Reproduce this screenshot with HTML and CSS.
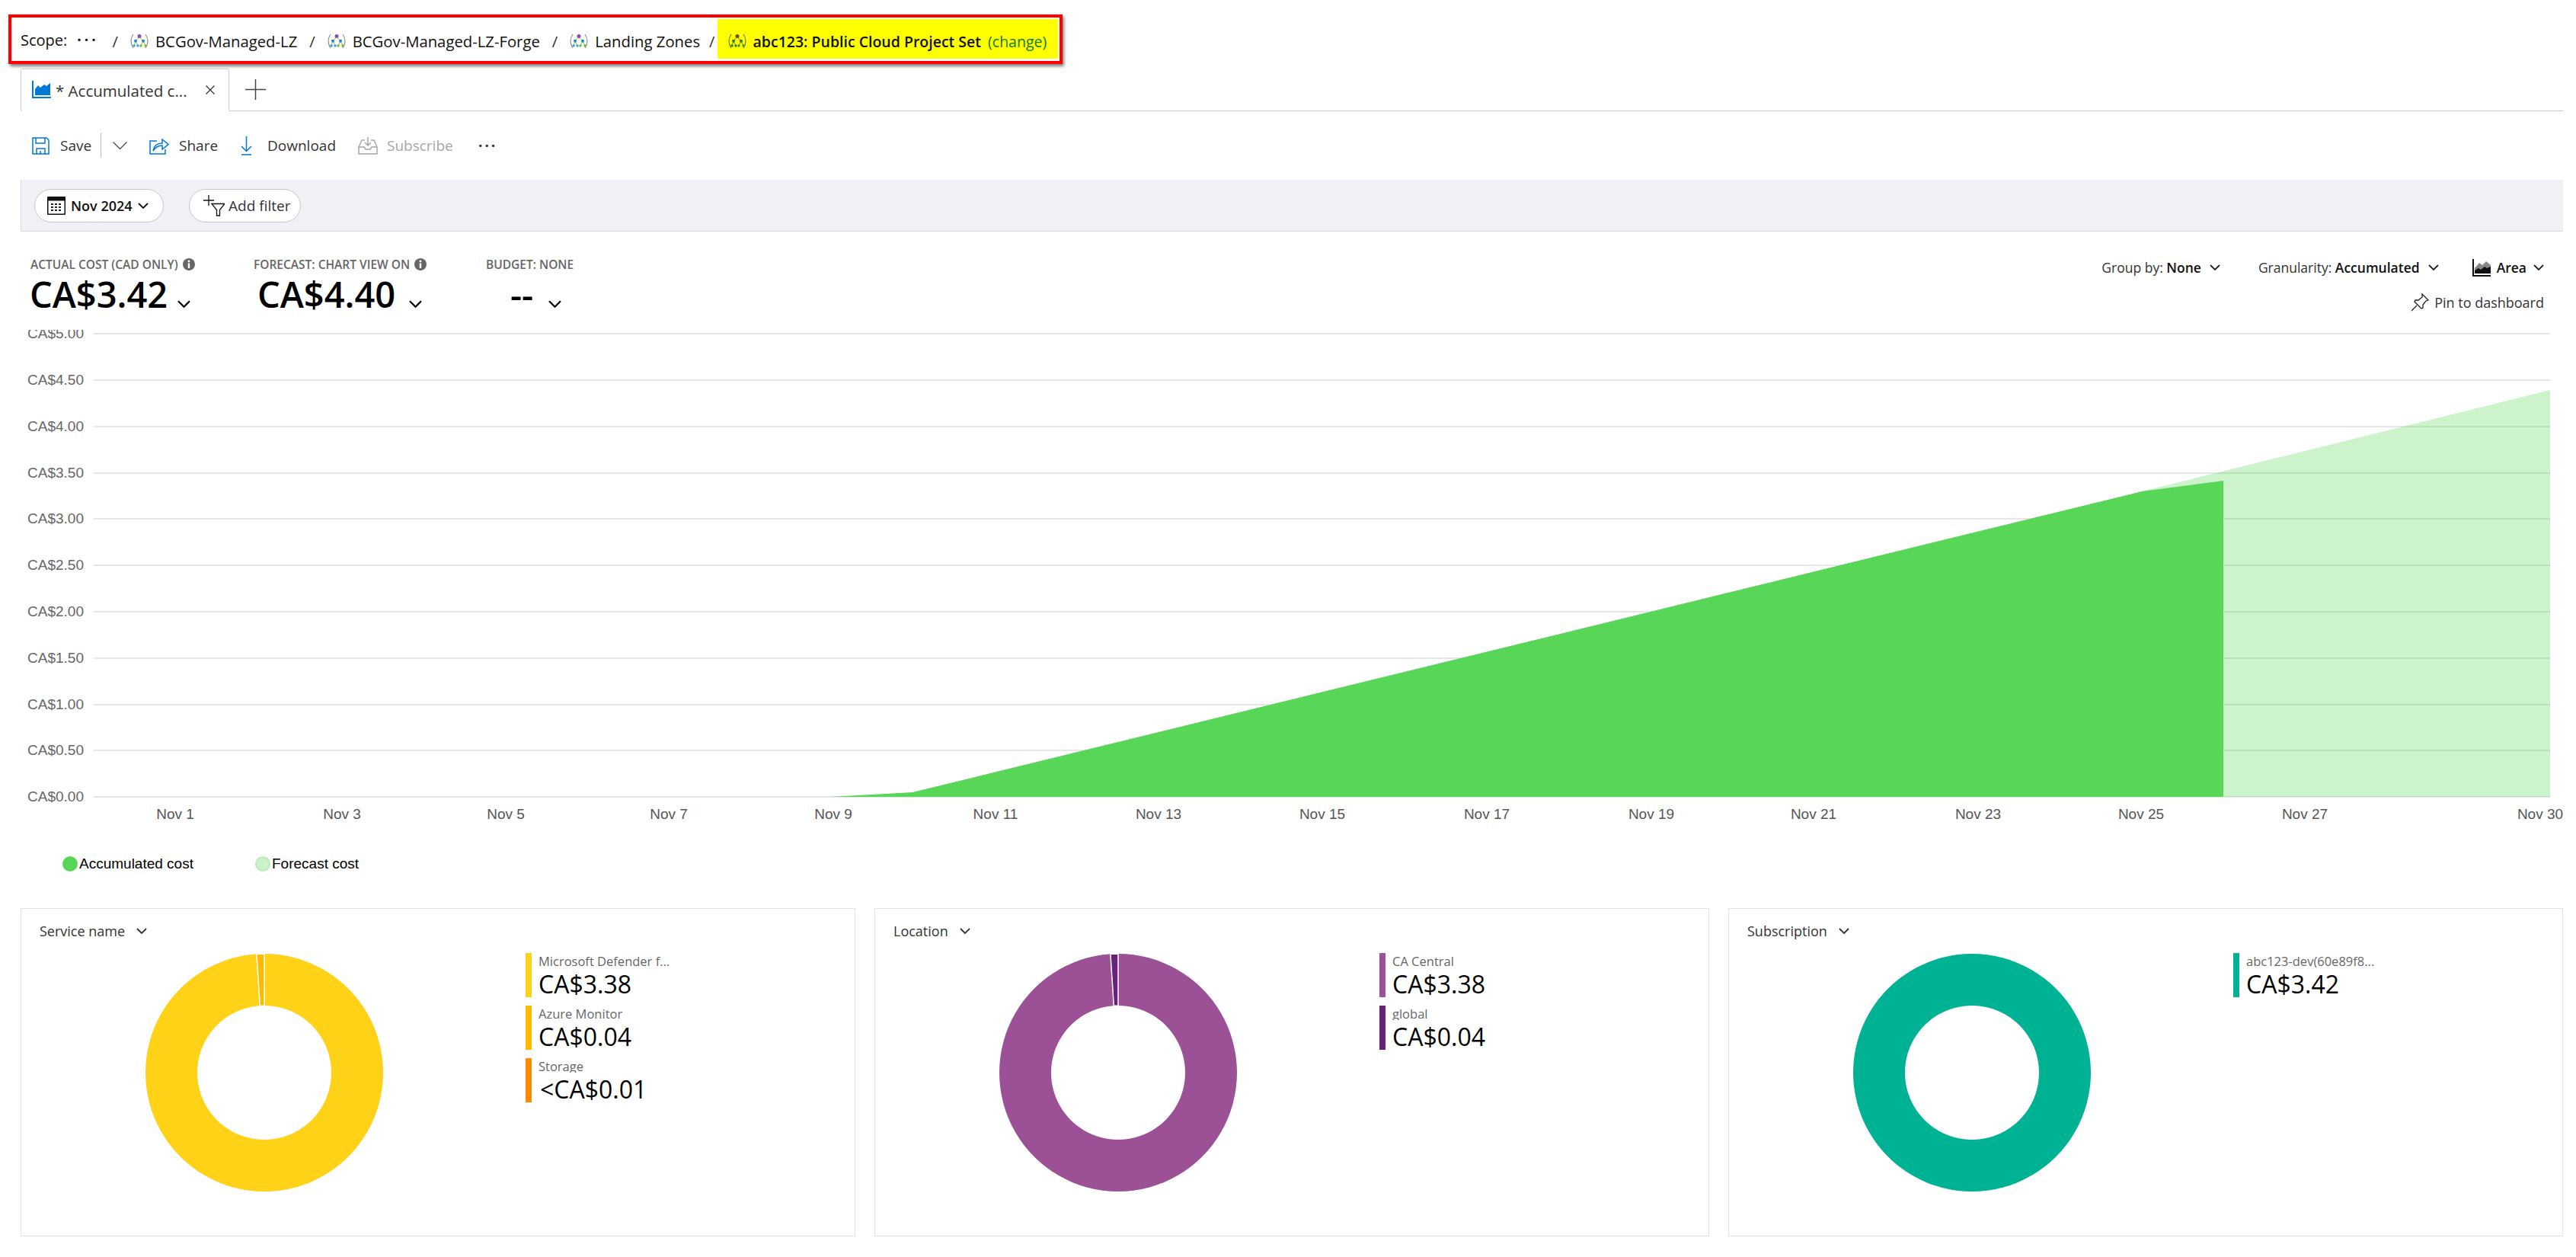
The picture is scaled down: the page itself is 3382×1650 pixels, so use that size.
FILE: index.html
```html
<!DOCTYPE html>
<html lang="en">
<head>
    <meta charset="UTF-8">
    <title>Cost analysis</title>
    <link rel="stylesheet" href="styles.css">
</head>
<body>
    <svg class="defs">
        <symbol id="chev" viewBox="0 0 14 8"><path d="M1 1l6 6 6-6" fill="none" stroke="currentColor" stroke-width="1.8"/></symbol>
        <symbol id="mg" viewBox="0 0 24 20">
            <path d="M4 1C2 4 1 7 1 10s1 6 3 9M20 1c2 3 3 6 3 9s-1 6-3 9" fill="none" stroke="#8f8f8f" stroke-width="1.2"/>
            <path d="M12 4L7 10l-2 6M7 10l3 6M12 4l5 6-3 6M17 10l3 6" fill="none" stroke="#86c440" stroke-width="1"/>
            <circle cx="12" cy="3.5" r="2.5" fill="#8a4fa8"/>
            <circle cx="7" cy="9.7" r="2" fill="#1e88d8"/><circle cx="17" cy="9.7" r="2" fill="#1e88d8"/>
            <circle cx="5" cy="16" r="1.7" fill="#3aa0e0"/><circle cx="10" cy="16" r="1.7" fill="#3aa0e0"/>
            <circle cx="14" cy="16" r="1.7" fill="#7ab82e"/><circle cx="20" cy="16" r="1.7" fill="#7ab82e"/>
        </symbol>
        <symbol id="mg-hi" viewBox="0 0 24 20">
            <path d="M4 1C2 4 1 7 1 10s1 6 3 9M20 1c2 3 3 6 3 9s-1 6-3 9" fill="none" stroke="#6f7a20" stroke-width="1.2"/>
            <path d="M12 4L7 10l-2 6M7 10l3 6M12 4l5 6-3 6M17 10l3 6" fill="none" stroke="#5a8f10" stroke-width="1"/>
            <circle cx="12" cy="3.5" r="2.5" fill="#7a4a20"/>
            <circle cx="7" cy="9.7" r="2" fill="#2a7a30"/><circle cx="17" cy="9.7" r="2" fill="#2a7a30"/>
            <circle cx="5" cy="16" r="1.7" fill="#2a7a30"/><circle cx="10" cy="16" r="1.7" fill="#2a7a30"/>
            <circle cx="14" cy="16" r="1.7" fill="#4f8f10"/><circle cx="20" cy="16" r="1.7" fill="#4f8f10"/>
        </symbol>
        <symbol id="info" viewBox="0 0 16 16"><circle cx="8" cy="8" r="8" fill="#666"/><rect x="6.8" y="6.5" width="2.4" height="6.5" fill="#fff"/><circle cx="8" cy="4" r="1.4" fill="#fff"/></symbol>
    </svg>

    <div class="scope-bar">
        <span class="scope-label">Scope:</span>
        <span class="scope-dots">&middot;&middot;&middot;</span>
        <span class="scope-sep">/</span>
        <svg class="mg-icon"><use href="#mg"/></svg>
        <span class="crumb">BCGov-Managed-LZ</span>
        <span class="scope-sep">/</span>
        <svg class="mg-icon"><use href="#mg"/></svg>
        <span class="crumb">BCGov-Managed-LZ-Forge</span>
        <span class="scope-sep">/</span>
        <svg class="mg-icon"><use href="#mg"/></svg>
        <span class="crumb">Landing Zones</span>
        <span class="scope-sep scope-sep-last">/</span>
        <div class="scope-current">
            <svg class="mg-icon"><use href="#mg-hi"/></svg>
            <span class="crumb-current">abc123: Public Cloud Project Set</span>
            <span class="crumb-change">(change)</span>
        </div>
    </div>

    <div class="tab-row">
        <div class="tab">
            <svg class="tab-icon" viewBox="0 0 25 23"><path d="M1 0v22h24" fill="none" stroke="#0078d4" stroke-width="2"/><path d="M4 19v-8l4-5 3 3 5-4 3 2 5-4v16z" fill="#0078d4"/></svg>
            <span class="tab-title">* Accumulated c...</span>
            <svg class="tab-close" viewBox="0 0 12 12"><path d="M.5.5l11 11M11.5.5l-11 11" stroke="#333" stroke-width="1.3"/></svg>
        </div>
        <svg class="tab-add" viewBox="0 0 27 27"><path d="M13.5 0v27M0 13.5h27" stroke="#444" stroke-width="1.5"/></svg>
    </div>

    <div class="toolbar">
        <svg class="tool-icon icon-save" viewBox="0 0 23 23"><path d="M1 1h18l3 3v18H1zM6 22v-7h11v7M5 1v7h12V1M11 18v4" fill="none" stroke="#0078d4" stroke-width="1.5"/></svg>
        <span class="tool-text tool-save">Save</span>
        <span class="tool-divider"></span>
        <svg class="tool-chev" viewBox="0 0 19 10"><path d="M.5.5l9 9 9-9" fill="none" stroke="#444" stroke-width="1.2"/></svg>
        <svg class="tool-icon icon-share" viewBox="0 0 26 23"><path d="M10 5H1v17h20v-6" fill="none" stroke="#0078d4" stroke-width="1.5"/><path d="M5 18c1-7 6-10 12-10V3l8 6.5-8 6.5v-5c-5 0-9 2-12 7z" fill="none" stroke="#0078d4" stroke-width="1.5"/></svg>
        <span class="tool-text tool-share">Share</span>
        <svg class="tool-icon icon-download" viewBox="0 0 15 25"><path d="M7.5 0v19M1 13l6.5 6.5L14 13M1 24h13" fill="none" stroke="#0078d4" stroke-width="1.5"/></svg>
        <span class="tool-text tool-download">Download</span>
        <svg class="tool-icon icon-subscribe" viewBox="0 0 26 24"><path d="M1 14l4-9h4M25 14l-4-9h-4M1 14v9h24v-9h-7l-2 3h-6l-2-3zM13 1v11M9 8l4 4 4-4" fill="none" stroke="#a6a6a6" stroke-width="1.5"/></svg>
        <span class="tool-text tool-subscribe">Subscribe</span>
        <span class="tool-more">&middot;&middot;&middot;</span>
    </div>

    <div class="filter-bar">
        <div class="pill pill-date">
            <svg class="cal-icon" viewBox="0 0 24 24"><rect width="24" height="24" rx="1" fill="#111"/><rect x="1.5" y="5.5" width="21" height="17" fill="#fff"/><path d="M5 9h3v2H5zM10 9h3v2h-3zM15 9h3v2h-3zM5 13h3v2H5zM10 13h3v2h-3zM15 13h3v2h-3zM5 17h3v2H5zM10 17h3v2h-3zM15 17h3v2h-3z" fill="#222"/></svg>
            <span class="pill-date-text">Nov 2024</span>
            <svg class="pill-chev"><use href="#chev"/></svg>
        </div>
        <div class="pill pill-filter">
            <svg class="filter-icon" viewBox="0 0 28 28"><path d="M7 0v14M0 7h14" stroke="#111" stroke-width="1.3"/><path d="M11 11.5h17l-6.5 8V27h-4v-7.5z" fill="none" stroke="#111" stroke-width="1.3"/></svg>
            <span class="pill-filter-text">Add filter</span>
        </div>
    </div>

    <div class="summary">
        <div class="kpis">
            <div class="kpi kpi-actual">
                <div class="kpi-label">ACTUAL COST (CAD ONLY) <svg class="info-icon"><use href="#info"/></svg></div>
                <div class="kpi-value">CA$3.42<svg class="kpi-chev"><use href="#chev"/></svg></div>
            </div>
            <div class="kpi kpi-forecast">
                <div class="kpi-label">FORECAST: CHART VIEW ON <svg class="info-icon"><use href="#info"/></svg></div>
                <div class="kpi-value">CA$4.40<svg class="kpi-chev"><use href="#chev"/></svg></div>
            </div>
            <div class="kpi kpi-budget">
                <div class="kpi-label">BUDGET: NONE</div>
                <div class="kpi-value">--<svg class="kpi-chev"><use href="#chev"/></svg></div>
            </div>
        </div>
        <div class="chart-controls">
            <div class="control-row">
                <span class="control">Group by: <b>None</b><svg class="control-chev"><use href="#chev"/></svg></span>
                <span class="control control-gran">Granularity: <b>Accumulated</b><svg class="control-chev"><use href="#chev"/></svg></span>
                <span class="control control-area">
                    <svg class="area-icon" viewBox="0 0 24 23"><path d="M1 0v22h23" fill="none" stroke="#111" stroke-width="2"/><path d="M3 12l6-7 4 3 5-5 6 5v8H3z" fill="#888"/><path d="M3 19v-4l5-3 3 2 5-4 3 2 5-2v9z" fill="#111"/></svg>
                    <b>Area</b><svg class="control-chev"><use href="#chev"/></svg>
                </span>
            </div>
            <div class="pin-row">
                <svg class="pin-icon" viewBox="0 0 24 24"><path d="M15 1l8 8-3 1-4 5 0 4-2 1-9-9 1-2h4l5-4zM8 16l-7 7" fill="none" stroke="#222" stroke-width="1.3"/></svg>
                <span>Pin to dashboard</span>
            </div>
        </div>
    </div>

    <svg class="cost-chart" viewBox="0 433 3382 652">
        <g class="grid">
            <path d="M123 438H3348M123 499H3348M123 560H3348M123 621H3348M123 681H3348M123 742H3348M123 803H3348M123 864H3348M123 925H3348M123 985H3348M123 1046H3348"/>
        </g>
        <polygon class="area-forecast" points="2812,645 3348,512 3348,1046 2812,1046"/>
        <polygon class="area-actual" points="1090,1046 1198,1040 2812,645 2919,631 2919,1046"/>
        <g class="y-axis">
            <text x="110" y="444">CA$5.00</text>
            <text x="110" y="505">CA$4.50</text>
            <text x="110" y="566">CA$4.00</text>
            <text x="110" y="627">CA$3.50</text>
            <text x="110" y="687">CA$3.00</text>
            <text x="110" y="748">CA$2.50</text>
            <text x="110" y="809">CA$2.00</text>
            <text x="110" y="870">CA$1.50</text>
            <text x="110" y="931">CA$1.00</text>
            <text x="110" y="991">CA$0.50</text>
            <text x="110" y="1052">CA$0.00</text>
        </g>
        <g class="x-axis">
            <text x="230" y="1075">Nov 1</text>
            <text x="449" y="1075">Nov 3</text>
            <text x="664" y="1075">Nov 5</text>
            <text x="878" y="1075">Nov 7</text>
            <text x="1094" y="1075">Nov 9</text>
            <text x="1307" y="1075">Nov 11</text>
            <text x="1521" y="1075">Nov 13</text>
            <text x="1736" y="1075">Nov 15</text>
            <text x="1952" y="1075">Nov 17</text>
            <text x="2168" y="1075">Nov 19</text>
            <text x="2381" y="1075">Nov 21</text>
            <text x="2597" y="1075">Nov 23</text>
            <text x="2811" y="1075">Nov 25</text>
            <text x="3026" y="1075">Nov 27</text>
            <text x="3335" y="1075">Nov 30</text>
        </g>
    </svg>

    <div class="chart-legend">
        <span class="legend-item legend-actual"><i class="legend-dot dot-actual"></i>Accumulated cost</span>
        <span class="legend-item"><i class="legend-dot dot-forecast"></i>Forecast cost</span>
    </div>

    <div class="cards">
        <div class="card">
            <div class="card-title">Service name<svg class="card-chev"><use href="#chev"/></svg></div>
            <div class="card-body">
                <svg class="donut" viewBox="0 0 312 312">
                    <path class="ring ring-service" fill-rule="evenodd" d="M156 0a156 156 0 1 0 .01 0zM156 68a88 88 0 1 1-.01 0z"/>
                    <path class="slice slice-azure" d="M156 0A156 156 0 0 0 145.9.33L150.3 68.2A88 88 0 0 0 156 68z"/>
                </svg>
                <div class="breakdown">
                    <div class="break-item"><i class="break-bar bar-defender"></i><div><div class="break-label">Microsoft Defender f...</div><div class="break-value">CA$3.38</div></div></div>
                    <div class="break-item"><i class="break-bar bar-azure"></i><div><div class="break-label">Azure Monitor</div><div class="break-value">CA$0.04</div></div></div>
                    <div class="break-item"><i class="break-bar bar-storage"></i><div><div class="break-label">Storage</div><div class="break-value break-value-lt">&lt;CA$0.01</div></div></div>
                </div>
            </div>
        </div>
        <div class="card">
            <div class="card-title">Location<svg class="card-chev"><use href="#chev"/></svg></div>
            <div class="card-body">
                <svg class="donut" viewBox="0 0 312 312">
                    <path class="ring ring-location" fill-rule="evenodd" d="M156 0a156 156 0 1 0 .01 0zM156 68a88 88 0 1 1-.01 0z"/>
                    <path class="slice slice-global" d="M156 0A156 156 0 0 0 145.9.33L150.3 68.2A88 88 0 0 0 156 68z"/>
                </svg>
                <div class="breakdown">
                    <div class="break-item"><i class="break-bar bar-central"></i><div><div class="break-label">CA Central</div><div class="break-value">CA$3.38</div></div></div>
                    <div class="break-item"><i class="break-bar bar-global"></i><div><div class="break-label">global</div><div class="break-value">CA$0.04</div></div></div>
                </div>
            </div>
        </div>
        <div class="card">
            <div class="card-title">Subscription<svg class="card-chev"><use href="#chev"/></svg></div>
            <div class="card-body">
                <svg class="donut" viewBox="0 0 312 312">
                    <path class="ring ring-sub" fill-rule="evenodd" d="M156 0a156 156 0 1 0 .01 0zM156 68a88 88 0 1 1-.01 0z"/>
                </svg>
                <div class="breakdown">
                    <div class="break-item"><i class="break-bar bar-sub"></i><div><div class="break-label">abc123-dev(60e89f8...</div><div class="break-value">CA$3.42</div></div></div>
                </div>
            </div>
        </div>
    </div>
</body>
</html>
```

FILE: styles.css
```css
body {
    margin: 0;
    background-color: #fff;
    color: #222;
    font-family: "Open Sans", sans-serif;
    font-size: 19px;
    width: 3382px;
    height: 1650px;
    overflow: hidden;
}
.defs {
    display: none;
}

/* scope breadcrumb */
.scope-bar {
    display: flex;
    align-items: center;
    box-sizing: border-box;
    width: 1384px;
    height: 65px;
    margin: 19px 0 0 11px;
    padding: 5px 0 0 12px;
    border: 4px solid #ff0000;
    box-shadow: 2px 3px 4px rgba(0, 0, 0, 0.5);
    color: #111;
    font-size: 20.3px;
    white-space: nowrap;
}
.scope-label {
    margin-bottom: 4px;
    font-size: 20px;
}
.scope-dots {
    margin: 0 2px 4px 13px;
    font-size: 19px;
    font-weight: 700;
    letter-spacing: 4px;
}
.scope-sep {
    margin: 0 16px;
    color: #333;
}
.scope-sep-last {
    margin: 0 3px 0 12px;
}
.mg-icon {
    width: 24px;
    height: 20px;
    margin-right: 9px;
    flex: none;
}
.scope-current {
    display: flex;
    align-items: center;
    height: 52px;
    width: 447px;
    box-sizing: border-box;
    margin-top: -6px;
    padding: 6px 0 0 14px;
    background-color: #ffff00;
}
.crumb-current {
    font-weight: 600;
    font-size: 19.5px;
    color: #111;
}
.crumb-change {
    margin-left: 9px;
    font-size: 19.5px;
    color: #107c10;
}

/* tabs */
.tab-row {
    display: flex;
    align-items: center;
    height: 56px;
    margin: 6px 17px 0 27px;
    box-sizing: border-box;
    border-bottom: 1px solid #ccc;
}
.tab {
    display: flex;
    align-items: center;
    box-sizing: border-box;
    width: 274px;
    height: 56px;
    padding-left: 14px;
    border: 1px solid #ccc;
    border-bottom: 1px solid #fff;
    border-radius: 2px 2px 0 0;
    background-color: #fff;
}
.tab-icon {
    width: 25px;
    height: 23px;
    margin-right: 6px;
}
.tab-title {
    padding-top: 2px;
    color: #333;
    font-size: 20.5px;
    width: 197px;
    white-space: nowrap;
}
.tab-close {
    width: 12px;
    height: 12px;
}
.tab-add {
    width: 27px;
    height: 27px;
    margin-left: 21px;
}

/* toolbar */
.toolbar {
    display: flex;
    align-items: center;
    height: 90px;
    padding-left: 42px;
    color: #333;
}
.tool-icon {
    flex: none;
}
.icon-save { width: 23px; height: 23px; margin-right: 14px; }
.tool-save { width: 53px; }
.tool-divider {
    width: 1px;
    height: 32px;
    background-color: #bbb;
}
.tool-chev {
    width: 19px;
    height: 10px;
    margin: 0 29px 0 15px;
}
.icon-share { width: 26px; height: 23px; margin-right: 13px; }
.tool-share { width: 81px; }
.icon-download { width: 15px; height: 25px; margin-right: 20px; }
.tool-download { width: 119px; }
.icon-subscribe { width: 26px; height: 24px; margin-right: 12px; }
.tool-subscribe { width: 120px; color: #a6a6a6; }
.tool-more {
    font-weight: 700;
    letter-spacing: 3px;
}

/* filter bar */
.filter-bar {
    display: flex;
    align-items: center;
    gap: 33px;
    height: 68px;
    box-sizing: border-box;
    margin: 0 17px 0 27px;
    padding-left: 17px;
    background-color: #f0f1f6;
    border-left: 1px solid #d9d9d9;
    border-bottom: 1px solid #d9d9d9;
}
.pill {
    display: flex;
    align-items: center;
    height: 44px;
    box-sizing: border-box;
    background-color: #fff;
    border: 1px solid #c8c8c8;
    border-radius: 22px;
    color: #111;
}
.pill-date {
    width: 170px;
    padding-left: 16px;
}
.cal-icon {
    width: 24px;
    height: 24px;
    margin-right: 7px;
}
.pill-date-text {
    font-weight: 600;
    font-size: 18px;
}
.pill-chev {
    width: 14px;
    height: 8px;
    margin-left: 7px;
}
.pill-filter {
    width: 147px;
    padding-left: 18px;
}
.filter-icon {
    width: 28px;
    height: 28px;
    margin: 0 5px 0 0;
}
.pill-filter-text {
    color: #333;
}

/* kpis and chart controls */
.summary {
    display: flex;
    justify-content: space-between;
    height: 129px;
    box-sizing: border-box;
    padding: 32px 42px 0 39px;
}
.kpis {
    display: flex;
}
.kpi-actual { width: 293px; }
.kpi-forecast { width: 305px; }
.kpi-label {
    display: flex;
    align-items: center;
    gap: 6px;
    height: 22px;
    padding-left: 1px;
    font-size: 15.5px;
    font-weight: 600;
    color: #666;
    white-space: nowrap;
}
.info-icon {
    width: 16px;
    height: 16px;
}
.kpi-value {
    display: flex;
    align-items: center;
    margin-top: -1px;
    height: 58px;
    font-size: 47px;
    font-weight: 600;
    color: #000;
    white-space: nowrap;
}
.kpi-forecast .kpi-value { padding-left: 6px; }
.kpi-budget .kpi-value { padding-left: 33px; }
.kpi-chev {
    width: 19px;
    height: 10px;
    margin: 26px 0 0 12px;
}
.kpi-forecast .kpi-chev { margin-left: 17px; }
.kpi-budget .kpi-chev { margin-left: 19px; }
.chart-controls {
    display: flex;
    flex-direction: column;
    align-items: flex-end;
    font-size: 17.5px;
    color: #333;
}
.control-row {
    display: flex;
    align-items: center;
    height: 30px;
}
.control {
    display: flex;
    align-items: center;
    white-space: pre;
}
.control b {
    font-weight: 600;
    color: #111;
}
.control-gran {
    margin-left: 50px;
}
.control-area {
    margin-left: 44px;
}
.control-chev {
    width: 14px;
    height: 8px;
    margin-left: 11px;
    color: #222;
}
.control-area .control-chev {
    margin-left: 9px;
}
.area-icon {
    width: 24px;
    height: 23px;
    margin-right: 8px;
}
.pin-row {
    display: flex;
    align-items: center;
    gap: 7px;
    margin-top: 16px;
    height: 30px;
    font-size: 18px;
}
.pin-icon {
    width: 24px;
    height: 24px;
}

/* cost chart */
.cost-chart {
    display: block;
    width: 3382px;
    height: 652px;
    font-family: "Liberation Sans", Arial, sans-serif;
    font-size: 19px;
}
.grid path {
    stroke: #e6e6e6;
    stroke-width: 2;
    fill: none;
}
.area-forecast {
    fill: #56d656;
    fill-opacity: 0.3;
}
.area-actual {
    fill: #57d657;
}
.y-axis text {
    fill: #666;
    text-anchor: end;
}
.x-axis text {
    fill: #555;
    text-anchor: middle;
}
.chart-legend {
    display: flex;
    box-sizing: border-box;
    height: 107px;
    padding: 39px 0 0 82px;
    font-family: "Liberation Sans", Arial, sans-serif;
    font-size: 19px;
    color: #000;
}
.legend-item {
    display: flex;
    align-items: center;
    gap: 2px;
    height: 20px;
}
.legend-actual {
    width: 253px;
}
.legend-dot {
    width: 20px;
    height: 20px;
    box-sizing: border-box;
    border-radius: 50%;
}
.dot-actual {
    background-color: #57d657;
}
.dot-forecast {
    background-color: #cdf2cb;
    border: 2px solid #b8ecb6;
}

/* breakdown cards */
.cards {
    display: grid;
    grid-template-columns: repeat(3, 1fr);
    gap: 25px;
    margin: 0 17px 0 27px;
}
.card {
    box-sizing: border-box;
    height: 431px;
    border: 1px solid #e3e3e3;
}
.card-title {
    display: flex;
    align-items: center;
    height: 58px;
    padding-left: 24px;
    box-sizing: border-box;
    font-size: 18px;
    color: #333;
}
.card-chev {
    width: 14px;
    height: 8px;
    margin-left: 15px;
}
.card-body {
    display: flex;
    padding-left: 163px;
}
.donut {
    width: 312px;
    height: 312px;
    margin-top: 1px;
    flex: none;
}
.ring-service { fill: #ffd117; }
.ring-location { fill: #9c5096; }
.ring-sub { fill: #00b294; }
.slice {
    stroke: #fff;
    stroke-width: 1.5;
}
.slice-azure { fill: #ffb900; }
.slice-global { fill: #68217a; }
.breakdown {
    display: flex;
    flex-direction: column;
    gap: 11px;
    margin-left: 187px;
}
.break-item {
    display: flex;
    gap: 9px;
    height: 58px;
}
.break-bar {
    width: 8px;
    height: 58px;
}
.bar-defender { background-color: #ffd117; }
.bar-azure { background-color: #ffb900; }
.bar-storage { background-color: #ff8c00; }
.bar-central { background-color: #9c5096; }
.bar-global { background-color: #68217a; }
.bar-sub { background-color: #00b294; }
.break-label {
    height: 19px;
    line-height: 22px;
    overflow: hidden;
    font-size: 16.5px;
    color: #666;
    white-space: nowrap;
}
.break-value {
    margin-top: 3px;
    font-size: 32px;
    line-height: 38px;
    color: #000;
    white-space: nowrap;
}
.break-value-lt {
    padding-left: 2px;
}
```
